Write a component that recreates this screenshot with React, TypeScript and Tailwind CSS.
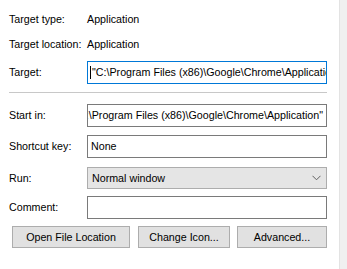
import React from 'react';

function Label({ children }: { children: React.ReactNode }) {
  return <div className="w-[78px] shrink-0">{children}</div>;
}

export default function App() {
  return (
    <div className="w-[347px] h-[269px] bg-white flex font-['Liberation_Sans',Arial,sans-serif] text-[10.7px] text-[#000] leading-none">
      <div className="w-[339px] pl-[9px] pr-[12px] pt-[10px] flex flex-col">
        <div className="flex items-center h-[18px]">
          <Label>Target type:</Label>
          <span>Application</span>
        </div>
        <div className="flex items-center h-[18px] mt-[7px]">
          <Label>Target location:</Label>
          <span>Application</span>
        </div>
        <div className="flex items-center h-[23px] mt-[8px]">
          <Label>Target:</Label>
          <div className="flex-1 h-full border border-[#0078d7] flex items-center overflow-hidden whitespace-nowrap pl-[2px]">
            <span className="w-px h-[13px] bg-black mr-px shrink-0" />
            <span className="shrink-0">"C:\Program Files (x86)\Google\Chrome\Application\chrome.exe"</span>
          </div>
        </div>

        <div className="h-px bg-[#c8c8c8] mt-[8px]" />

        <div className="flex items-center h-[23px] mt-[11px]">
          <Label>Start in:</Label>
          <div className="flex-1 h-full border border-[#7a7a7a] flex items-center justify-end overflow-hidden whitespace-nowrap pr-[3px]">
            <span className="shrink-0">"C:\Program Files (x86)\Google\Chrome\Application"</span>
          </div>
        </div>
        <div className="flex items-center h-[23px] mt-[8px]">
          <Label>Shortcut key:</Label>
          <div className="flex-1 h-full border border-[#7a7a7a] flex items-center pl-[3px]">None</div>
        </div>
        <div className="flex items-center h-[22px] mt-[9px]">
          <Label>Run:</Label>
          <div className="flex-1 h-full border border-[#adadad] bg-[#e5e5e5] flex items-center justify-between pl-[4px] pr-[5px]">
            <span>Normal window</span>
            <svg width="9" height="6" viewBox="0 0 9 6" fill="none">
              <path d="M0.5 0.8 L4.5 4.8 L8.5 0.8" stroke="#606060" strokeWidth="1" />
            </svg>
          </div>
        </div>
        <div className="flex items-center h-[23px] mt-[7px]">
          <Label>Comment:</Label>
          <div className="flex-1 h-full border border-[#7a7a7a]" />
        </div>

        <div className="flex h-[22px] mt-[7px] pl-[3px] gap-[7px]">
          <button className="w-[118px] h-full border border-[#adadad] bg-[#e1e1e1]">Open File Location</button>
          <button className="w-[92px] h-full border border-[#adadad] bg-[#e1e1e1] ml-px">Change Icon...</button>
          <button className="w-[90px] h-full border border-[#adadad] bg-[#e1e1e1]">Advanced...</button>
        </div>
      </div>
      <div className="w-[8px] bg-[#f0f0f0] border-l border-[#e3e3e3]" />
    </div>
  );
}
